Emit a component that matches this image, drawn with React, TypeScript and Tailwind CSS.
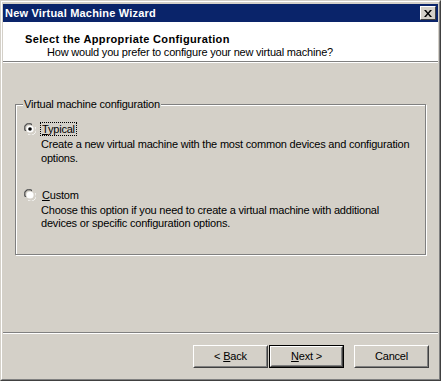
const font = "font-['Liberation_Sans',Arial,sans-serif]"

function Radio({ checked }: { checked?: boolean }) {
  return (
    <svg width="12" height="12" viewBox="0 0 12 12" className="shrink-0">
      <path d="M1 8 A5 5 0 0 1 8 1" stroke="#808080" fill="none" />
      <path d="M2 8 A4 4 0 0 1 8 2" stroke="#404040" fill="none" />
      <path d="M4 11 A5 5 0 0 0 11 4" stroke="#ffffff" fill="none" />
      <path d="M4 10 A4 4 0 0 0 10 4" stroke="#d4d0c8" fill="none" />
      <circle cx="6" cy="6" r="3.6" fill="#ffffff" />
      {checked && <circle cx="6" cy="6" r="1.8" fill="#000000" />}
    </svg>
  )
}

function Button({ label, accel, rest, pre, isDefault }: { label?: string; accel?: string; rest?: string; pre?: string; isDefault?: boolean }) {
  return (
    <div className={`w-[75px] h-[23px] ${isDefault ? "border border-black" : ""}`}>
      <div className="h-full border border-t-white border-l-white border-r-[#404040] border-b-[#404040]">
        <div className="h-full flex items-center justify-center border border-t-[#d4d0c8] border-l-[#d4d0c8] border-r-[#808080] border-b-[#808080] text-[11px] text-black tracking-[-0.2px]">
          {label ?? (
            <span>
              {pre}
              <span className="underline">{accel}</span>
              {rest}
            </span>
          )}
        </div>
      </div>
    </div>
  )
}

export default function App() {
  return (
    <div className={`w-[441px] h-[381px] ${font} bg-[#d4d0c8] border border-t-[#d4d0c8] border-l-[#d4d0c8] border-r-[#404040] border-b-[#404040]`}>
      <div className="h-full flex flex-col border border-t-white border-l-white border-r-[#808080] border-b-[#808080] px-[1px] pt-[2px]">
        {/* title bar */}
        <div className="h-[18px] bg-[#0a246a] flex items-center justify-between pl-[2px] pr-[2px]">
          <span className="text-white font-bold text-[11px] tracking-[0.2px]">New Virtual Machine Wizard</span>
          <div className="w-[16px] h-[14px] border border-t-white border-l-white border-r-[#404040] border-b-[#404040] bg-[#d4d0c8] flex items-center justify-center">
            <svg width="8" height="7" viewBox="0 0 8 7">
              <path d="M0 0 L2 0 L4 2.5 L6 0 L8 0 L5 3.5 L8 7 L6 7 L4 4.5 L2 7 L0 7 L3 3.5 Z" fill="#000" />
            </svg>
          </div>
        </div>

        {/* header */}
        <div className="h-[40px] bg-white border-b border-b-[#808080] pt-[11px] pl-[22px]">
          <div className="text-[11px] font-bold text-black leading-[13px] tracking-[0.35px]">Select the Appropriate Configuration</div>
          <div className="text-[11px] text-black leading-[13px] pl-[22px] tracking-[-0.2px]">How would you prefer to configure your new virtual machine?</div>
        </div>
        <div className="h-px bg-white" />

        {/* body */}
        <div className="flex-1 flex flex-col text-[11px] text-black tracking-[-0.2px]">
          <div className="pt-[41px] pl-[12px] pr-[12px]">
            <div className="relative h-[151px] border border-[#808080] shadow-[1px_1px_0_#ffffff,inset_1px_1px_0_#ffffff] pl-[8px] pt-[17px]">
              <span className="absolute left-[7px] top-[-7px] bg-[#d4d0c8] px-[1px] leading-[13px]">Virtual machine configuration</span>
              <div className="flex gap-[5px] items-start">
                <div className="pt-[1px]"><Radio checked /></div>
                <div className="w-[372px] leading-[14px]">
                  <span className="outline outline-1 outline-dotted outline-black px-[1px]"><span className="underline">T</span>ypical</span>
                  <div className="pt-[1px] leading-[14px]">Create a new virtual machine with the most common devices and configuration options.</div>
                </div>
              </div>
              <div className="flex gap-[5px] items-start mt-[23px]">
                <div className="pt-[1px]"><Radio /></div>
                <div className="w-[372px] leading-[14px]">
                  <span className="px-[1px]"><span className="underline">C</span>ustom</span>
                  <div className="pt-[2px] leading-[13px]">Choose this option if you need to create a virtual machine with additional devices or specific configuration options.</div>
                </div>
              </div>
            </div>
          </div>

          <div className="flex-1" />
          <div className="h-px bg-[#808080]" />
          <div className="h-px bg-white" />
          <div className="flex justify-end pt-[11px] pb-[11px] pr-[9px]">
            <Button pre="< " accel="B" rest="ack" />
            <div className="w-[1px]" />
            <Button accel="N" rest="ext >" isDefault />
            <div className="w-[10px]" />
            <Button label="Cancel" />
          </div>
        </div>
      </div>
    </div>
  )
}
